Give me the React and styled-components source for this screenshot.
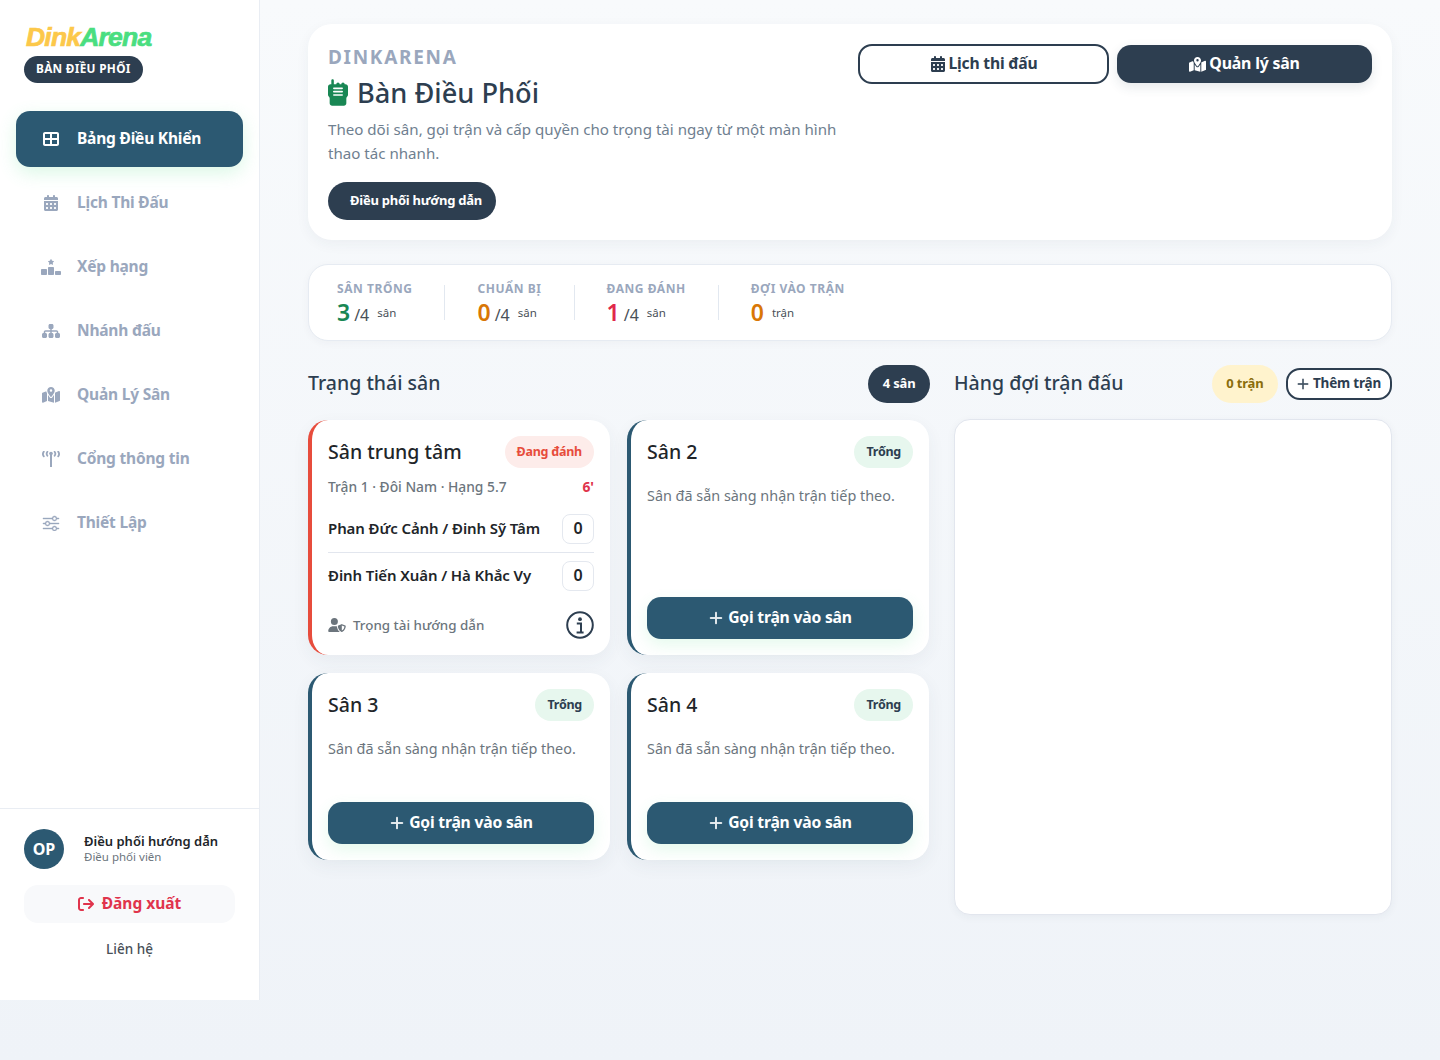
import React from 'react'
import styled, { createGlobalStyle } from 'styled-components'
import {
  FaTableCellsLarge, FaCalendarDays, FaRankingStar, FaSitemap, FaMapLocationDot,
  FaWalkieTalkie, FaUserShield, FaArrowRightFromBracket,
} from 'react-icons/fa6'
import { BsSliders, BsPlusLg } from 'react-icons/bs'

const GlobalStyle = createGlobalStyle`
  html, body { margin: 0; padding: 0; }
  body {
    min-height: 1060px;
    background: linear-gradient(180deg, #f8fafc 0%, #eff3f8 100%);
    font-family: "Noto Sans", "Open Sans", sans-serif;
    color: #212529;
  }
  * { box-sizing: border-box; }
`

const Shell = styled.div`
  display: flex;
  align-items: flex-start;
  width: 1440px;
`

const Sidebar = styled.aside`
  width: 260px;
  height: 1000px;
  flex: none;
  display: flex;
  flex-direction: column;
  background: #fff;
  border-right: 1px solid #e9edf3;
`

const Brand = styled.div`
  padding: 24px 24px 0;
  height: 111px;
`

const Logo = styled.div`
  font-family: "Liberation Sans", sans-serif;
  font-weight: 700;
  font-style: italic;
  font-size: 26.5px;
  line-height: 26px;
  letter-spacing: -0.8px;
  padding-left: 2px;
  -webkit-text-stroke: 0.7px currentColor;
  color: #fcc84a;
  span { color: #4ade80; }
`

const BrandTag = styled.div`
  display: inline-flex;
  align-items: center;
  height: 27px;
  margin-top: 6px;
  padding: 0 12px 3px;
  border-radius: 14px;
  background: #2d3e50;
  color: #fff;
  font-size: 11.8px;
  font-weight: 700;
  letter-spacing: 0.3px;
`

const Nav = styled.nav`
  display: flex;
  flex-direction: column;
  gap: 8px;
  padding: 0 16px;
  flex: 1;
`

const NavItem = styled.a`
  display: flex;
  align-items: center;
  height: 56px;
  width: 227px;
  padding: 0 0 2px 25px;
  gap: 16px;
  border-radius: 14px;
  font-size: 15.5px;
  font-weight: 700;
  letter-spacing: -0.2px;
  color: ${p => (p.$active ? '#fff' : '#9aa7bd')};
  background: ${p => (p.$active ? '#2c5972' : 'transparent')};
  box-shadow: ${p => (p.$active ? '0 6px 18px rgba(74, 222, 128, 0.2)' : 'none')};
  svg { width: 20px; height: 16px; flex: none; margin-top: 2px; }
`

const SideFoot = styled.div`
  border-top: 1px solid #e9edf3;
  padding: 20px 24px 0;
  height: 192px;
`

const UserRow = styled.div`
  display: flex;
  align-items: center;
  gap: 20px;
`

const Avatar = styled.div`
  width: 40px;
  height: 40px;
  border-radius: 50%;
  background: #2c5972;
  color: #fff;
  font-size: 16px;
  font-weight: 700;
  display: flex;
  align-items: center;
  justify-content: center;
`

const UserName = styled.div`
  font-size: 13px;
  line-height: 17px;
  font-weight: 600;
  color: #212529;
  margin-top: -2px;
`

const UserRole = styled.div`
  font-size: 11.5px;
  line-height: 14px;
  color: #6c757d;
`

const Logout = styled.button`
  display: flex;
  align-items: center;
  justify-content: center;
  gap: 8px;
  width: 211px;
  height: 38px;
  margin-top: 16px;
  padding: 0 0 2px;
  border: 0;
  border-radius: 14px;
  background: #f8f9fb;
  color: #e0344c;
  font: 700 15.5px "Noto Sans", sans-serif;
  svg { width: 16px; height: 16px; margin-top: 2px; }
`

const Contact = styled.div`
  margin-top: 16px;
  width: 211px;
  text-align: center;
  font-size: 13.5px;
  line-height: 20px;
  font-weight: 500;
  color: #495057;
`

const Main = styled.main`
  flex: 1;
  padding: 24px 48px 0;
`

const Hero = styled.section`
  display: flex;
  justify-content: space-between;
  height: 216px;
  padding: 20px;
  background: #fff;
  border-radius: 24px;
  box-shadow: 0 4px 14px rgba(45, 62, 80, 0.05);
`

const HeroText = styled.div`
  width: 520px;
`

const Eyebrow = styled.div`
  font-size: 19px;
  line-height: 26px;
  font-weight: 700;
  letter-spacing: 1.7px;
  color: #9aa7bd;
`

const HeroTitle = styled.h1`
  display: flex;
  align-items: center;
  gap: 9px;
  margin: 2px 0 0;
  height: 40px;
  font-size: 27.2px;
  font-weight: 500;
  color: #2d3e50;
  svg { width: 20px; height: 27px; color: #198754; flex: none; }
`

const HeroDesc = styled.p`
  margin: 5px 0 0;
  font-size: 15.12px;
  line-height: 24px;
  color: #6f8090;
`

const GuideBtn = styled.button`
  display: block;
  height: 38px;
  width: 168px;
  margin-top: 17px;
  border: 0;
  border-radius: 19px;
  background: #2d3e50;
  color: #fff;
  padding: 0 0 2px 8px;
  font: 700 13px "Noto Sans", sans-serif;
  letter-spacing: -0.25px;
`

const HeroActions = styled.div`
  display: flex;
  align-items: flex-start;
  gap: 8px;
`

const HeroBtn = styled.button`
  display: flex;
  align-items: center;
  justify-content: center;
  gap: 3px;
  width: ${p => (p.$solid ? '255px' : '251px')};
  height: ${p => (p.$solid ? '38px' : '40px')};
  margin-top: ${p => (p.$solid ? '1px' : '0')};
  padding: 0 0 2px;
  border: ${p => (p.$solid ? '0' : '2px solid #2d3e50')};
  border-radius: 14px;
  background: ${p => (p.$solid ? '#2d3e50' : '#fff')};
  color: ${p => (p.$solid ? '#fff' : '#2d3e50')};
  box-shadow: ${p => (p.$solid ? '0 4px 12px rgba(45, 62, 80, 0.12)' : 'none')};
  font: 700 ${p => (p.$solid ? '15.9px' : '15.7px')} "Noto Sans", sans-serif;
  letter-spacing: -0.2px;
  svg { width: auto; height: ${p => (p.$solid ? '17px' : '16px')}; margin-top: 2px; }
`

const Stats = styled.section`
  display: flex;
  align-items: flex-start;
  height: 77px;
  margin-top: 24px;
  padding: 17px 28px 0;
  background: #fff;
  border: 1px solid #e6ebf2;
  border-radius: 20px;
  box-shadow: 0 2px 8px rgba(45, 62, 80, 0.04);
`

const StatItem = styled.div`
  padding: 0 32px;
  &:first-child { padding-left: 0; }
`

const StatDivider = styled.div`
  width: 1px;
  height: 35px;
  margin-top: 3px;
  background: #e2e8f0;
`

const StatLabel = styled.div`
  font-size: 12px;
  line-height: 14px;
  font-weight: 700;
  letter-spacing: 0.55px;
  color: #9aa7bd;
  white-space: nowrap;
`

const StatValue = styled.div`
  margin-top: 4px;
  line-height: 24px;
  font-size: 16px;
  color: #495057;
  white-space: nowrap;
`

const StatNum = styled.b`
  font-size: 23px;
  font-weight: 600;
  margin-right: 4px;
  color: ${p => p.$color};
`

const StatUnit = styled.span`
  font-size: 11.5px;
  margin-left: ${p => (p.$bare ? '4px' : '8px')};
  vertical-align: 4px;
`

const Board = styled.div`
  display: grid;
  grid-template-columns: 622px 438px;
  gap: 24px;
  margin-top: 24px;
`

const SectionHead = styled.div`
  display: flex;
  align-items: center;
  height: 38px;
  gap: 8px;
`

const SectionTitle = styled.h2`
  flex: 1;
  margin: 0 0 2px;
  font-size: 19.5px;
  line-height: 36px;
  font-weight: 500;
  color: #2d3e50;
`

const Pill = styled.div`
  display: flex;
  align-items: center;
  height: 38px;
  padding: 0 14.5px 2px;
  border-radius: 19px;
  font-size: 13px;
  font-weight: 700;
  letter-spacing: -0.15px;
  background: ${p => p.$bg};
  color: ${p => p.$fg};
`

const AddBtn = styled.button`
  display: flex;
  align-items: center;
  gap: 3px;
  height: 32px;
  width: 106px;
  padding: 0 0 2px 8px;
  border: 2px solid #2d3e50;
  border-radius: 14px;
  background: #fff;
  color: #2d3e50;
  font: 700 13.5px "Noto Sans", sans-serif;
  letter-spacing: -0.2px;
  white-space: nowrap;
  svg { width: 14px; height: 14px; flex: none; margin-top: 2px; stroke: currentColor; stroke-width: 0.6px; }
`

const Courts = styled.div`
  display: grid;
  grid-template-columns: 302px 302px;
  column-gap: 17px;
  row-gap: 18px;
  margin-top: 17px;
`

const Card = styled.article`
  display: flex;
  flex-direction: column;
  height: ${p => (p.$tall ? '235px' : '187px')};
  padding: 16px;
  background: #fff;
  border-left: 4px solid ${p => p.$accent};
  border-radius: 20px;
  box-shadow: 0 6px 18px rgba(45, 62, 80, 0.06);
`

const CardHead = styled.div`
  display: flex;
  align-items: center;
  justify-content: space-between;
  height: 32px;
`

const CardTitle = styled.h3`
  margin: 0 0 2px;
  font-size: 19.5px;
  font-weight: 500;
  color: #212529;
`

const Badge = styled.span`
  display: flex;
  align-items: center;
  height: 32px;
  padding: 0 12px 2px;
  border-radius: 16px;
  font-size: 12.5px;
  font-weight: 700;
  letter-spacing: -0.25px;
  background: ${p => p.$bg};
  color: ${p => p.$fg};
`

const MatchLine = styled.div`
  display: flex;
  justify-content: space-between;
  margin-top: 9px;
  font-size: 13.8px;
  line-height: 20px;
  color: #6c757d;
  font-weight: 500;
  b { color: #e0344c; font-weight: 700; }
`

const Teams = styled.div`
  margin-top: 17px;
`

const TeamRow = styled.div`
  display: flex;
  align-items: center;
  justify-content: space-between;
  height: 30px;
  font-size: 15px;
  font-weight: 600;
  letter-spacing: -0.1px;
  color: #212529;
`

const TeamName = styled.span`
  margin-bottom: 2px;
`

const Score = styled.span`
  display: flex;
  align-items: center;
  justify-content: center;
  width: 32px;
  height: 30px;
  padding-bottom: 3px;
  border: 1px solid #e4e8ef;
  border-radius: 8px;
  font-size: 16px;
  font-weight: 600;
`

const TeamDivider = styled.hr`
  margin: 8px 0;
  border: 0;
  border-top: 1px solid #e2e6ee;
`

const RefRow = styled.div`
  display: flex;
  align-items: center;
  gap: 7px;
  margin-top: auto;
  height: 28px;
  font-size: 13.4px;
  font-weight: 500;
  color: #6c757d;
`

const RefIcon = styled(FaUserShield)`
  width: 18px;
  height: 14px;
  flex: none;
`

const InfoIcon = styled.svg`
  margin-left: auto;
  width: 28px;
  height: 28px;
  flex: none;
  color: #2d3e50;
`

const EmptyNote = styled.p`
  margin: 18px 0 0;
  font-size: 14.4px;
  line-height: 20px;
  color: #6c757d;
`

const CallBtn = styled.button`
  display: flex;
  align-items: center;
  justify-content: center;
  gap: 4px;
  width: 100%;
  height: 42px;
  margin-top: auto;
  padding: 0 0 2px;
  border: 0;
  border-radius: 14px;
  background: #2c5972;
  color: #fff;
  box-shadow: 0 6px 16px rgba(74, 222, 128, 0.14);
  font: 700 15.7px "Noto Sans", sans-serif;
  letter-spacing: -0.2px;
  svg { width: 16px; height: 16px; margin-top: 2px; stroke: currentColor; stroke-width: 0.7px; }
`

const QueuePanel = styled.div`
  height: 496px;
  margin-top: 16px;
  background: #fff;
  border: 1px solid #e2e6ee;
  border-radius: 16px;
  box-shadow: 0 2px 8px rgba(45, 62, 80, 0.05);
`

const HeavySliders = styled(BsSliders)`
  stroke: currentColor;
  stroke-width: 0.4px;
`

function TowerIcon() {
  return (
    <svg viewBox="0 0 20 16" fill="none" stroke="currentColor" strokeLinecap="round" strokeWidth="1.8">
      <path d="M10 2.5V15.5" strokeWidth="2" />
      <circle cx="10" cy="2.6" r="1.8" fill="currentColor" stroke="none" />
      <path d="M6.4 0.8C5.5 2 5.5 3.6 6.4 4.8M13.6 0.8C14.5 2 14.5 3.6 13.6 4.8" />
      <path d="M2.8 0.6C1.6 2.2 1.6 3.8 2.8 5.4M17.2 0.6C18.4 2.2 18.4 3.8 17.2 5.4" />
    </svg>
  )
}

const navItems = [
  { label: 'Bảng Điều Khiển', icon: FaTableCellsLarge, active: true },
  { label: 'Lịch Thi Đấu', icon: FaCalendarDays },
  { label: 'Xếp hạng', icon: FaRankingStar },
  { label: 'Nhánh đấu', icon: FaSitemap },
  { label: 'Quản Lý Sân', icon: FaMapLocationDot },
  { label: 'Cổng thông tin', icon: TowerIcon },
  { label: 'Thiết Lập', icon: HeavySliders },
]

const stats = [
  { label: 'SÂN TRỐNG', value: 3, color: '#198754', total: '/4', unit: 'sân' },
  { label: 'CHUẨN BỊ', value: 0, color: '#d97706', total: '/4', unit: 'sân' },
  { label: 'ĐANG ĐÁNH', value: 1, color: '#e0294a', total: '/4', unit: 'sân' },
  { label: 'ĐỢI VÀO TRẬN', value: 0, color: '#d97706', unit: 'trận' },
]

function EmptyCourt({ name, tall }) {
  return (
    <Card $accent="#2c5972" $tall={tall}>
      <CardHead>
        <CardTitle>{name}</CardTitle>
        <Badge $bg="#e7f7ee" $fg="#2d3e50">Trống</Badge>
      </CardHead>
      <EmptyNote>Sân đã sẵn sàng nhận trận tiếp theo.</EmptyNote>
      <CallBtn><BsPlusLg />Gọi trận vào sân</CallBtn>
    </Card>
  )
}

export default function App() {
  return (
    <Shell>
      <GlobalStyle />
      <Sidebar>
        <Brand>
          <Logo>Dink<span>Arena</span></Logo>
          <BrandTag>BÀN ĐIỀU PHỐI</BrandTag>
        </Brand>
        <Nav>
          {navItems.map(item => (
            <NavItem key={item.label} $active={item.active}>
              <item.icon />
              {item.label}
            </NavItem>
          ))}
        </Nav>
        <SideFoot>
          <UserRow>
            <Avatar>OP</Avatar>
            <div>
              <UserName>Điều phối hướng dẫn</UserName>
              <UserRole>Điều phối viên</UserRole>
            </div>
          </UserRow>
          <Logout><FaArrowRightFromBracket />Đăng xuất</Logout>
          <Contact>Liên hệ</Contact>
        </SideFoot>
      </Sidebar>

      <Main>
        <Hero>
          <HeroText>
            <Eyebrow>DINKARENA</Eyebrow>
            <HeroTitle><FaWalkieTalkie />Bàn Điều Phối</HeroTitle>
            <HeroDesc>Theo dõi sân, gọi trận và cấp quyền cho trọng tài ngay từ một màn hình thao tác nhanh.</HeroDesc>
            <GuideBtn>Điều phối hướng dẫn</GuideBtn>
          </HeroText>
          <HeroActions>
            <HeroBtn><FaCalendarDays />Lịch thi đấu</HeroBtn>
            <HeroBtn $solid><FaMapLocationDot />Quản lý sân</HeroBtn>
          </HeroActions>
        </Hero>

        <Stats>
          {stats.map((s, i) => (
            <React.Fragment key={s.label}>
              {i > 0 && <StatDivider />}
              <StatItem>
                <StatLabel>{s.label}</StatLabel>
                <StatValue>
                  <StatNum $color={s.color}>{s.value}</StatNum>
                  {s.total}
                  <StatUnit $bare={!s.total}>{s.unit}</StatUnit>
                </StatValue>
              </StatItem>
            </React.Fragment>
          ))}
        </Stats>

        <Board>
          <div>
            <SectionHead>
              <SectionTitle>Trạng thái sân</SectionTitle>
              <Pill $bg="#2d3e50" $fg="#fff">4 sân</Pill>
            </SectionHead>
            <Courts>
              <Card $accent="#e74c3c" $tall>
                <CardHead>
                  <CardTitle>Sân trung tâm</CardTitle>
                  <Badge $bg="#fdecea" $fg="#e74c3c">Đang đánh</Badge>
                </CardHead>
                <MatchLine>Trận 1 · Đôi Nam · Hạng 5.7<b>6'</b></MatchLine>
                <Teams>
                  <TeamRow><TeamName>Phan Đức Cảnh / Đinh Sỹ Tâm</TeamName><Score>0</Score></TeamRow>
                  <TeamDivider />
                  <TeamRow><TeamName>Đinh Tiến Xuân / Hà Khắc Vy</TeamName><Score>0</Score></TeamRow>
                </Teams>
                <RefRow>
                  <RefIcon />Trọng tài hướng dẫn
                  <InfoIcon viewBox="0 0 28 28" fill="none" stroke="currentColor" strokeWidth="2">
                    <circle cx="14" cy="14" r="12.8" />
                    <circle cx="14" cy="8.2" r="1.9" fill="currentColor" stroke="none" />
                    <path d="M10.8 12.6H15V21M10.6 21.4H17.6" />
                  </InfoIcon>
                </RefRow>
              </Card>
              <EmptyCourt name="Sân 2" tall />
              <EmptyCourt name="Sân 3" />
              <EmptyCourt name="Sân 4" />
            </Courts>
          </div>
          <div>
            <SectionHead>
              <SectionTitle>Hàng đợi trận đấu</SectionTitle>
              <Pill $bg="#fff3cd" $fg="#8a6d0b">0 trận</Pill>
              <AddBtn><BsPlusLg />Thêm trận</AddBtn>
            </SectionHead>
            <QueuePanel />
          </div>
        </Board>
      </Main>
    </Shell>
  )
}
